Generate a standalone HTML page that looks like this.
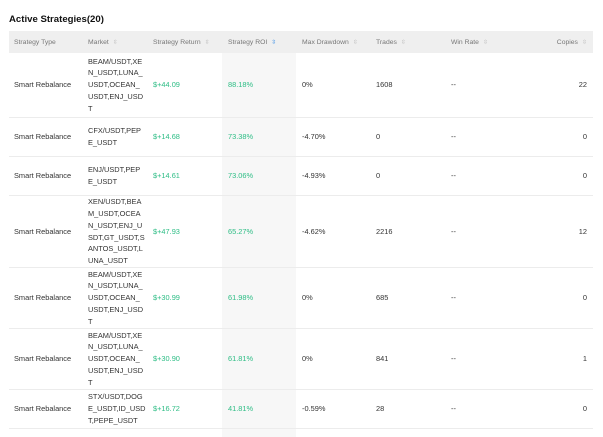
<!DOCTYPE html>
<html><head><style>
*{margin:0;padding:0;box-sizing:border-box}
body{width:603px;height:437px;overflow:hidden;background:#fff;font-family:"Liberation Sans",sans-serif;color:#333;font-size:7.4px;position:relative}
.t{position:absolute;left:9px;top:14px;font-size:9.6px;font-weight:bold;color:#111}
.hd{position:absolute;left:9px;top:31px;width:584px;height:22px;background:#efefef}
.shade{position:absolute;left:222px;top:53px;width:74px;height:384px;background:#f7f7f7}
.h{position:absolute;top:39px;color:#777;font-size:6.8px}
.ar{color:#bbb;font-size:6px;margin-left:4px}
.row{position:absolute;left:9px;width:584px;border-bottom:1px solid #ececec}
.c{position:absolute;top:0;height:100%;display:flex;align-items:center;line-height:11.7px}
.g{color:#2dbd85}
</style></head><body>
<div class="t">Active Strategies(20)</div>
<div class="hd"></div>
<div class="shade"></div>
<div class="h" style="left:14px">Strategy Type</div>
<div class="h" style="left:88px">Market<span class="ar">⇳</span></div>
<div class="h" style="left:153px">Strategy Return<span class="ar">⇳</span></div>
<div class="h" style="left:228px">Strategy ROI<span class="ar" style="color:#3a8ee6">⇳</span></div>
<div class="h" style="left:302px">Max Drawdown<span class="ar">⇳</span></div>
<div class="h" style="left:376px">Trades<span class="ar">⇳</span></div>
<div class="h" style="left:451px">Win Rate<span class="ar">⇳</span></div>
<div class="h" style="right:16px">Copies<span class="ar">⇳</span></div>

<div class="row" style="top:53px;height:65px">
<div class="c" style="left:5px">Smart Rebalance</div><div class="c" style="left:79px">BEAM/USDT,XE<br>N_USDT,LUNA_<br>USDT,OCEAN_<br>USDT,ENJ_USD<br>T</div><div class="c g" style="left:144px">$+44.09</div><div class="c g" style="left:219px">88.18%</div><div class="c" style="left:293px">0%</div><div class="c" style="left:367px">1608</div><div class="c" style="left:442px">--</div><div class="c" style="right:6px">22</div></div>

<div class="row" style="top:118px;height:39px">
<div class="c" style="left:5px">Smart Rebalance</div><div class="c" style="left:79px">CFX/USDT,PEP<br>E_USDT</div><div class="c g" style="left:144px">$+14.68</div><div class="c g" style="left:219px">73.38%</div><div class="c" style="left:293px">-4.70%</div><div class="c" style="left:367px">0</div><div class="c" style="left:442px">--</div><div class="c" style="right:6px">0</div></div>

<div class="row" style="top:157px;height:39px">
<div class="c" style="left:5px">Smart Rebalance</div><div class="c" style="left:79px">ENJ/USDT,PEP<br>E_USDT</div><div class="c g" style="left:144px">$+14.61</div><div class="c g" style="left:219px">73.06%</div><div class="c" style="left:293px">-4.93%</div><div class="c" style="left:367px">0</div><div class="c" style="left:442px">--</div><div class="c" style="right:6px">0</div></div>

<div class="row" style="top:196px;height:72px">
<div class="c" style="left:5px">Smart Rebalance</div><div class="c" style="left:79px">XEN/USDT,BEA<br>M_USDT,OCEA<br>N_USDT,ENJ_U<br>SDT,GT_USDT,S<br>ANTOS_USDT,L<br>UNA_USDT</div><div class="c g" style="left:144px">$+47.93</div><div class="c g" style="left:219px">65.27%</div><div class="c" style="left:293px">-4.62%</div><div class="c" style="left:367px">2216</div><div class="c" style="left:442px">--</div><div class="c" style="right:6px">12</div></div>

<div class="row" style="top:268px;height:61px">
<div class="c" style="left:5px">Smart Rebalance</div><div class="c" style="left:79px">BEAM/USDT,XE<br>N_USDT,LUNA_<br>USDT,OCEAN_<br>USDT,ENJ_USD<br>T</div><div class="c g" style="left:144px">$+30.99</div><div class="c g" style="left:219px">61.98%</div><div class="c" style="left:293px">0%</div><div class="c" style="left:367px">685</div><div class="c" style="left:442px">--</div><div class="c" style="right:6px">0</div></div>

<div class="row" style="top:329px;height:61px">
<div class="c" style="left:5px">Smart Rebalance</div><div class="c" style="left:79px">BEAM/USDT,XE<br>N_USDT,LUNA_<br>USDT,OCEAN_<br>USDT,ENJ_USD<br>T</div><div class="c g" style="left:144px">$+30.90</div><div class="c g" style="left:219px">61.81%</div><div class="c" style="left:293px">0%</div><div class="c" style="left:367px">841</div><div class="c" style="left:442px">--</div><div class="c" style="right:6px">1</div></div>

<div class="row" style="top:390px;height:39px">
<div class="c" style="left:5px">Smart Rebalance</div><div class="c" style="left:79px">STX/USDT,DOG<br>E_USDT,ID_USD<br>T,PEPE_USDT</div><div class="c g" style="left:144px">$+16.72</div><div class="c g" style="left:219px">41.81%</div><div class="c" style="left:293px">-0.59%</div><div class="c" style="left:367px">28</div><div class="c" style="left:442px">--</div><div class="c" style="right:6px">0</div></div>
</body></html>
